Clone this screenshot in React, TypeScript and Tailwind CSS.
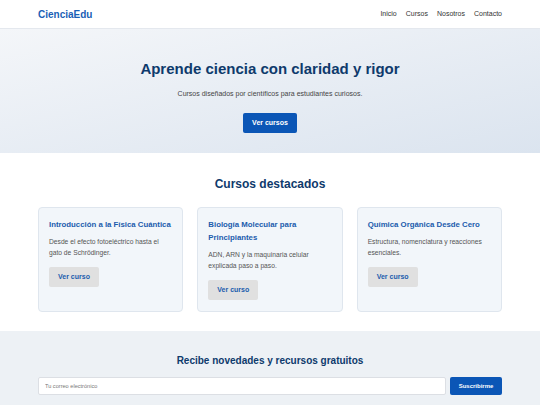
import React from 'react';

interface Course {
  id: number;
  titulo: string;
  descripcion: string;
}

const courses: Course[] = [
  {
    id: 1,
    titulo: 'Introducción a la Física Cuántica',
    descripcion: 'Desde el efecto fotoeléctrico hasta el gato de Schrödinger.'
  },
  {
    id: 2,
    titulo: 'Biología Molecular para Principiantes',
    descripcion: 'ADN, ARN y la maquinaria celular explicada paso a paso.'
  },
  {
    id: 3,
    titulo: 'Química Orgánica Desde Cero',
    descripcion: 'Estructura, nomenclatura y reacciones esenciales.'
  }
];

const navLinks = ['Inicio', 'Cursos', 'Nosotros', 'Contacto'];

export default function App() {
  return (
    <div className="min-h-screen bg-white font-['Liberation_Sans',Arial,sans-serif]">
      {/* Header */}
      <header className="h-[29px] px-[38px] flex items-center justify-between bg-white border-b border-[#e4e8ee]">
        <span className="text-[10px] font-bold text-[#1a5fb6]">CienciaEdu</span>
        <nav className="flex items-center gap-[9px]">
          {navLinks.map((link) => (
            <a key={link} className="text-[7px] text-[#333]">
              {link}
            </a>
          ))}
        </nav>
      </header>

      {/* Hero */}
      <section className="h-[124px] pt-[31px] flex flex-col items-center bg-linear-to-br from-[#f4f6f9] to-[#dbe4ef]">
        <h1 className="text-[15px] leading-[18px] font-bold text-[#0e3a6c]">
          Aprende ciencia con claridad y rigor
        </h1>
        <p className="mt-[11px] text-[7px] leading-[10px] text-[#444]">
          Cursos diseñados por científicos para estudiantes curiosos.
        </p>
        <button className="mt-[14px] h-[20px] px-[9px] rounded-[2px] bg-[#0b56b6] text-white text-[7px] font-bold">
          Ver cursos
        </button>
      </section>

      {/* Featured courses */}
      <section className="px-[38px] pt-[24px] pb-[19px] bg-white">
        <h2 className="text-center text-[12px] leading-[14px] font-bold text-[#0e3a6c]">
          Cursos destacados
        </h2>
        <div className="mt-[16px] grid grid-cols-3 gap-[14px]">
          {courses.map((course) => (
            <div
              key={course.id}
              className="h-[105px] pt-[10px] pl-[10px] pr-[8px] rounded-[4px] border border-[#dfe6ee] bg-[#f2f6fa] flex flex-col items-start"
            >
              <h3 className="text-[7.8px] leading-[13px] font-bold text-[#1b5cad]">
                {course.titulo}
              </h3>
              <p className="mt-[5px] pr-[2px] text-[6.7px] leading-[11px] text-[#555]">
                {course.descripcion}
              </p>
              <button className="mt-[9px] h-[20px] px-[9px] rounded-[2px] bg-[#e0e0e0] text-[#1b5cad] text-[7px] font-bold">
                Ver curso
              </button>
            </div>
          ))}
        </div>
      </section>

      {/* Newsletter */}
      <section className="h-[74px] px-[38px] pt-[24px] bg-[#edf1f5]">
        <h2 className="text-center text-[10px] leading-[12px] font-bold text-[#0e3a6c]">
          Recibe novedades y recursos gratuitos
        </h2>
        <div className="mt-[10px] flex gap-[4px]">
          <input
            type="email"
            placeholder="Tu correo electrónico"
            className="flex-1 h-[18px] px-[6px] rounded-[2px] border border-[#dcdfe4] bg-white text-[5.6px] placeholder:text-[#777] outline-none"
          />
          <button className="h-[18px] w-[52px] rounded-[2px] bg-[#0b56b6] text-white text-[6px] font-bold">
            Suscribirme
          </button>
        </div>
      </section>
    </div>
  );
}
